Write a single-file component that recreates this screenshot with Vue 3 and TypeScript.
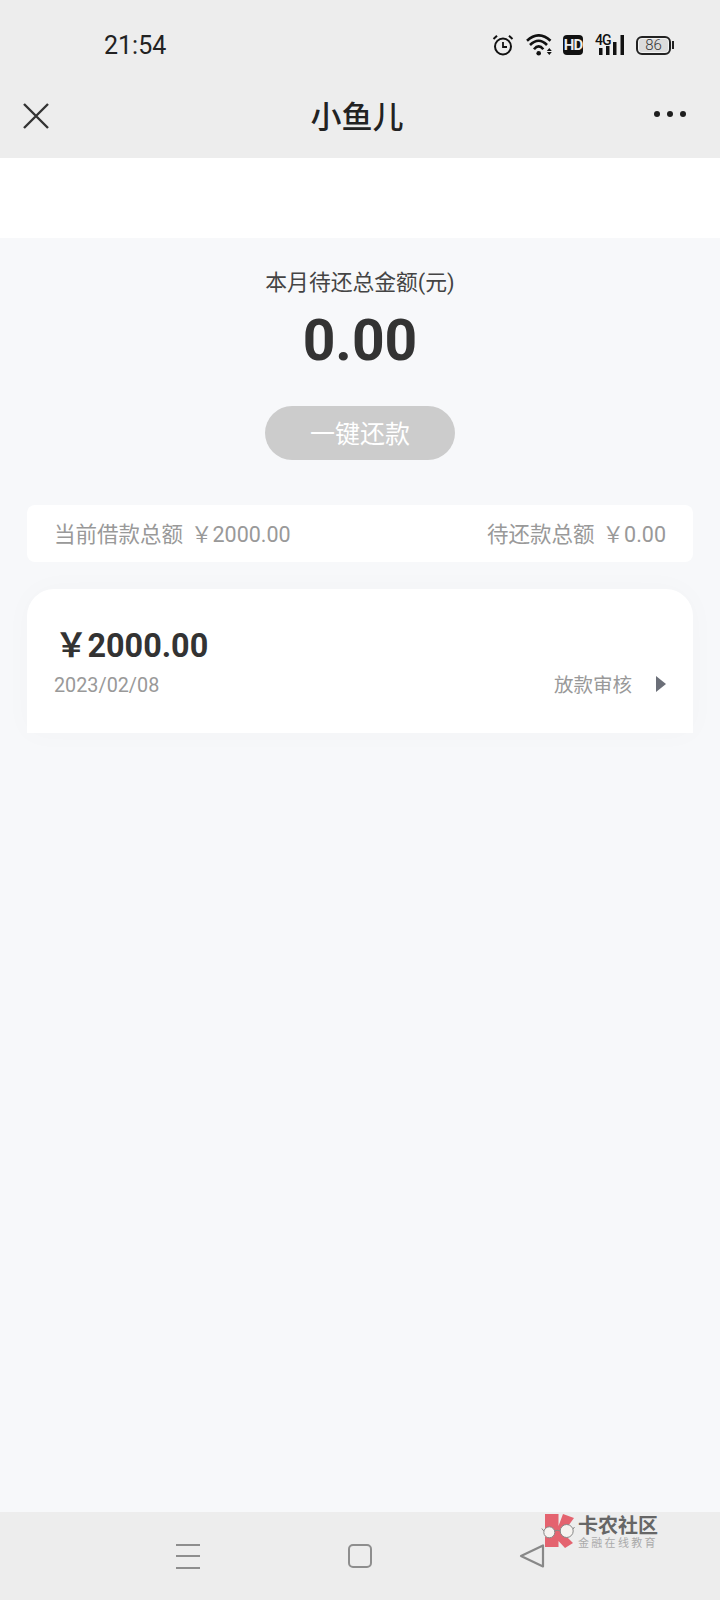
<template>
  <div class="page">
    <header class="top">
      <div class="status">
        <span class="time">21:54</span>
        <div class="status-icons">
          <svg width="22" height="22" viewBox="0 0 22 22" fill="none" stroke="#111">
            <circle cx="11" cy="12.5" r="8" stroke-width="2" />
            <path d="M11 8v5h4" stroke-width="1.8" />
            <path d="M1.5 5 5 1.8M20.5 5 17 1.8" stroke-width="2" />
          </svg>
          <svg class="ic-wifi" width="28" height="22" viewBox="0 0 28 22" fill="none" stroke="#111" stroke-width="2.6">
            <path d="M1 6.700Q12.700-4 24.500 6.700" />
            <path d="M4 11Q12.700 2.500 21 11" />
            <path d="M8 15.300Q12.700 9.500 17.300 15.300" />
            <circle cx="12.700" cy="19.300" r="2.300" fill="#111" stroke="none" />
            <path d="M20.800 17 23.300 14l2.500 3zM20.800 18l2.500 3 2.500-3z" fill="#111" stroke="none" />
          </svg>
          <span class="hd">HD</span>
          <div class="signal">
            <span class="g4">4G</span>
            <svg width="26" height="20" viewBox="0 0 26 20" fill="#111">
              <rect x="1" y="13" width="3.500" height="7" />
              <rect x="8" y="11" width="3.500" height="9" />
              <rect x="15" y="7" width="3.500" height="13" />
              <rect x="22.500" y="0" width="3.500" height="20" />
            </svg>
          </div>
          <div class="battery">
            <span class="cell">86</span>
            <span class="cap"></span>
          </div>
        </div>
      </div>
      <div class="nav">
        <svg class="close" width="28" height="28" viewBox="0 0 28 28" fill="none" stroke="#333" stroke-width="2.400">
          <path d="M2 2l24 24M26 2 2 26" />
        </svg>
        <h1 class="title">小鱼儿</h1>
        <div class="dots"><i></i><i></i><i></i></div>
      </div>
    </header>
    <div class="blank"></div>
    <main class="main">
      <p class="label">本月待还总金额(元)</p>
      <p class="amount">0.00</p>
      <button class="repay">一键还款</button>
      <div class="summary">
        <span>当前借款总额<em>￥</em>2000.00</span>
        <span>待还款总额<em>￥</em>0.00</span>
      </div>
      <div class="card">
        <div class="money">￥2000.00</div>
        <div class="meta">
          <span class="date">2023/02/08</span>
          <span class="state">放款审核<i class="arrow"></i></span>
        </div>
      </div>
    </main>
    <footer class="bottom">
      <div class="menu"><i></i><i></i><i></i></div>
      <div class="square"></div>
      <svg class="back" width="26" height="26" viewBox="0 0 26 26" fill="none" stroke="#888" stroke-width="2.200" stroke-linejoin="round">
        <path d="M24 2.500v21L2 13z" />
      </svg>
      <div class="mark">
        <svg width="36" height="38" viewBox="0 0 36 38">
          <path d="M4 1h13.500v12L22 1l11 4-11 15 10 10-8 5-6.500-7v6H4z" fill="#e4636f" />
          <circle cx="8.300" cy="19.300" r="5.500" fill="#f6f3f0" stroke="#888" stroke-width="1" />
          <circle cx="25.700" cy="18" r="6.500" fill="#f6f3f0" stroke="#888" stroke-width="1" />
          <path d="M13.500 18q2.500-1.500 6 0M2.800 18 .8 15.500M32 16l1.500-2" fill="none" stroke="#888" stroke-width="1" />
        </svg>
        <div class="mark-text">
          <b>卡农社区</b>
          <small>金融在线教育</small>
        </div>
      </div>
    </footer>
  </div>
</template>

<script setup lang="ts">
</script>

<style>
html,
body {
  margin: 0;
  background: #f7f8fa;
}
</style>

<style scoped>
.page {
  position: relative;
  display: flex;
  flex-direction: column;
  width: 720px;
  height: 1600px;
  overflow: hidden;
  font-family: Roboto, "Noto Sans CJK SC", sans-serif;
  background: #f7f8fa;
}
.top {
  height: 158px;
  background: #ededed;
}
.status {
  display: flex;
  justify-content: space-between;
  align-items: center;
  height: 90px;
  padding: 0 46px 0 104px;
}
.time {
  font-size: 25px;
  color: #222;
}
.status-icons {
  display: flex;
  align-items: center;
  gap: 12px;
}
.ic-wifi {
  margin-right: -3px;
}
.hd {
  width: 20px;
  height: 20px;
  border-radius: 4px;
  background: #111;
  color: #eee;
  font-size: 15px;
  font-weight: 700;
  line-height: 20px;
  text-align: center;
  letter-spacing: -1px;
}
.signal {
  position: relative;
  width: 29px;
  height: 20px;
  display: flex;
  justify-content: flex-end;
}
.g4 {
  position: absolute;
  left: 0;
  top: -2px;
  font-size: 14px;
  font-weight: 500;
  letter-spacing: -1px;
  color: #111;
  line-height: 14px;
}
.battery {
  display: flex;
  align-items: center;
  gap: 1px;
}
.cell {
  width: 35px;
  height: 19px;
  box-sizing: border-box;
  border: 2px solid #222;
  border-radius: 6px;
  background: #dcdcdc;
  box-shadow: inset 0 0 0 1px #f2f2f2;
  color: #333;
  font-size: 15px;
  font-weight: 300;
  line-height: 15px;
  text-align: center;
}
.cap {
  width: 2px;
  height: 8px;
  background: #222;
}
.nav {
  display: grid;
  grid-template-columns: 1fr auto 1fr;
  align-items: center;
  height: 48px;
  padding: 0 34px 0 28px;
}
.close {
  margin-top: 3px;
  margin-left: -6px;
}
.title {
  margin: 0;
  font-size: 31px;
  font-weight: 500;
  color: #222;
}
.dots {
  display: flex;
  justify-content: flex-end;
  gap: 7px;
}
.dots i {
  width: 6px;
  height: 6px;
  border-radius: 50%;
  background: #1e1e1e;
}
.blank {
  height: 80px;
  background: #fff;
}
.main {
  flex: 1;
  display: flex;
  flex-direction: column;
  align-items: center;
  padding: 31px 27px 0;
}
.label {
  margin: 0;
  font-size: 21.800px;
  line-height: 28px;
  color: #444;
}
.amount {
  margin: 9px 0 0;
  font-size: 57px;
  font-weight: 700;
  line-height: 70px;
  color: #333;
}
.repay {
  width: 190px;
  height: 54px;
  margin-top: 30px;
  padding: 0 0 3px;
  border: none;
  border-radius: 27px;
  background: #ccc;
  color: #fff;
  font-family: inherit;
  font-size: 25px;
}
.summary {
  display: flex;
  justify-content: space-between;
  align-items: center;
  width: 100%;
  box-sizing: border-box;
  height: 57px;
  margin-top: 45px;
  padding: 0 27px 3px;
  border-radius: 8px;
  background: #fff;
  font-size: 21.500px;
  color: #999;
}
.summary em {
  margin-left: 8px;
  font-style: normal;
}
.card {
  width: 100%;
  box-sizing: border-box;
  height: 144px;
  margin-top: 27px;
  padding: 38px 27px 0;
  border-radius: 27px 27px 0 0;
  background: #fff;
  box-shadow: 0 0 30px rgba(0, 0, 0, 0.025);
}
.money {
  margin-left: 1px;
  font-size: 32.400px;
  font-weight: 700;
  line-height: 38px;
  color: #333;
}
.meta {
  display: flex;
  justify-content: space-between;
  align-items: center;
  margin-top: 5px;
  height: 30px;
  color: #999;
}
.date {
  font-size: 19.800px;
}
.state {
  display: flex;
  align-items: center;
  margin-top: -3px;
  font-size: 19.500px;
}
.arrow {
  width: 0;
  height: 0;
  margin-left: 24px;
  border-left: 10px solid #6b6f78;
  border-top: 8px solid transparent;
  border-bottom: 8px solid transparent;
}
.bottom {
  position: relative;
  display: flex;
  align-items: center;
  height: 88px;
  padding-left: 176px;
  box-sizing: border-box;
  background: #ededed;
}
.menu {
  display: flex;
  flex-direction: column;
  gap: 9.500px;
  width: 24px;
}
.menu i {
  height: 2px;
  background: #8e8e8e;
}
.square {
  width: 20px;
  height: 20px;
  margin-left: 148px;
  border: 2px solid #8e8e8e;
  border-radius: 5px;
}
.back {
  margin-left: 147px;
}
.mark {
  position: absolute;
  left: 541px;
  top: 1px;
  display: flex;
  gap: 1px;
}
.mark-text {
  display: flex;
  flex-direction: column;
  padding-top: 2px;
}
.mark-text b {
  font-size: 20px;
  line-height: 22px;
  font-weight: 700;
  color: #666;
}
.mark-text small {
  font-size: 11px;
  line-height: 14px;
  letter-spacing: 2.300px;
  color: #aaa;
}
</style>
